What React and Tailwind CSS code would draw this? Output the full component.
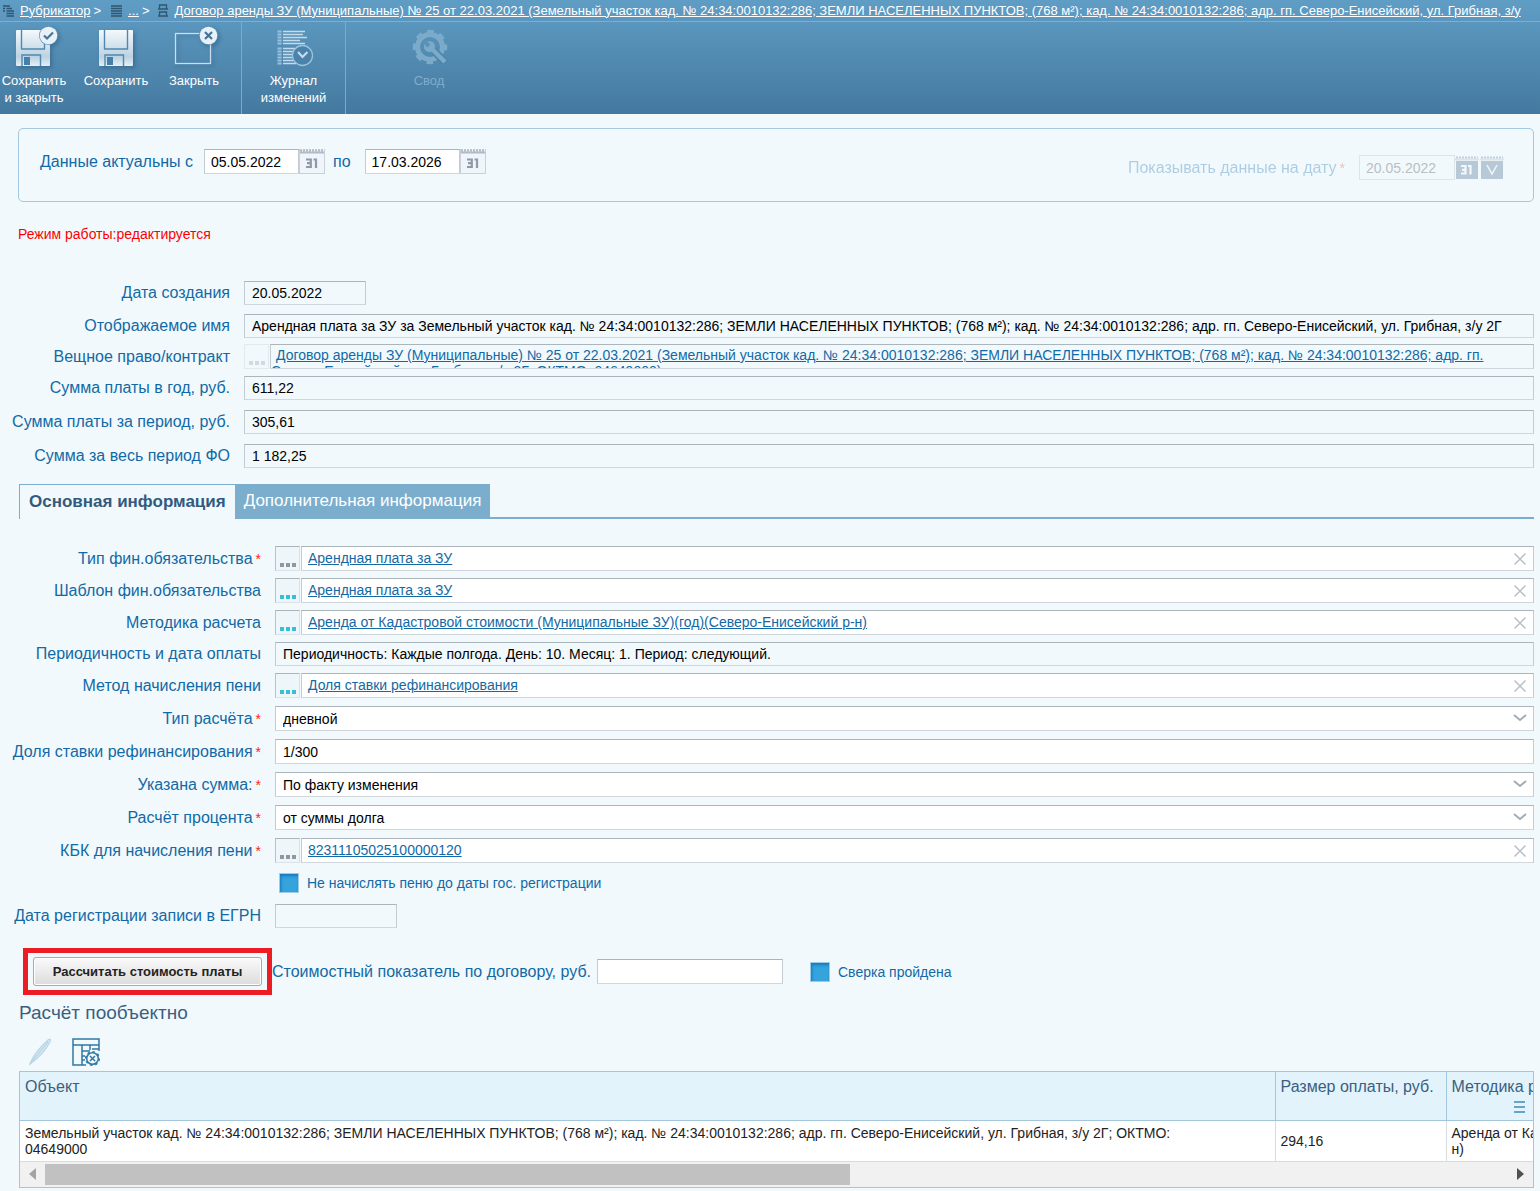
import React, { useState } from 'react'

const TITLE_TAIL =
  'Земельный участок кад. № 24:34:0010132:286; ЗЕМЛИ НАСЕЛЕННЫХ ПУНКТОВ; (768 м²); кад. № 24:34:0010132:286; адр. гп. Северо-Енисейский, ул. Грибная, з/у'
const CRUMB = `Договор аренды ЗУ (Муниципальные) № 25 от 22.03.2021 (${TITLE_TAIL}`
const CONTRACT = `${CRUMB} 2Г; ОКТМО: 04649000)`

const fieldBorder = 'border border-[#c3ccd3] border-t-[#aab5bc] border-b-[#d0d8de]'

const Floppy = ({ x }) => (
  <g transform={`translate(${x} 6)`}>
    <rect width="34" height="36" rx="1" fill="url(#steel)" />
    <path d="M5.5 0v19M28.5 0v19M5 19h24" stroke="#4f88ae" strokeWidth="1.4" fill="none" />
    <path d="M6 36V25h18.500V36" stroke="#4f88ae" strokeWidth="1.400" fill="none" />
    <rect x="8" y="27" width="6" height="8" fill="#4580a8" />
  </g>
)

const Badge = ({ children }) => (
  <g transform="translate(38.500 11.500)">
    <circle r="9.500" fill="#5a94ba" />
    <circle r="8.800" fill="#e9f1f7" />
    <g fill="none" stroke="#44749a" strokeWidth="2.200">{children}</g>
  </g>
)

const SaveCloseIcon = () => (
  <svg width="48" height="44" viewBox="0 0 48 44" className="drop-shadow-[2px_2px_2px_rgba(20,60,90,0.35)]">
    <defs>
      <linearGradient id="steel" x1="0" y1="0" x2="0" y2="1">
        <stop offset="0" stopColor="#f4f9fc" />
        <stop offset="0.750" stopColor="#bcd2e2" />
        <stop offset="1" stopColor="#e6eff5" />
      </linearGradient>
    </defs>
    <Floppy x="6" />
    <Badge><path d="M-4.500 0l3 3L4.500-3" /></Badge>
  </svg>
)

const SaveIcon = () => (
  <svg width="48" height="44" viewBox="0 0 48 44" className="drop-shadow-[2px_2px_2px_rgba(20,60,90,0.35)]">
    <Floppy x="7" />
  </svg>
)

const CloseIcon = () => (
  <svg width="48" height="44" viewBox="0 0 48 44" className="drop-shadow-[2px_2px_2px_rgba(20,60,90,0.35)]">
    <rect x="5.500" y="9.500" width="35" height="30" fill="none" stroke="#c9deec" strokeWidth="1.300" />
    <Badge><path d="M-3.500-3.500l7 7M3.500-3.500l-7 7" /></Badge>
  </svg>
)

const JournalIcon = () => (
  <svg width="48" height="44" viewBox="0 0 48 44" fill="none" stroke="#c3dbea">
    <path
      d="M13 7.500H35M13 10.500H33M13 13.500H37M13 16.500H30M13 19.500H35M13 24.500H25M13 27.500H23M13 30.500H22M13 33.500H22M13 36.500H23M13 39.500H26"
      strokeWidth="1.500"
    />
    <path
      d="M7.500 7.500h4M7.500 10.500h4M7.500 13.500h4M7.500 16.500h4M7.500 19.500h4M7.500 24.500h4M7.500 27.500h4M7.500 30.500h4M7.500 33.500h4M7.500 36.500h4M7.500 39.500h4"
      stroke="#9cc2db"
      strokeWidth="1.800"
    />
    <circle cx="32.500" cy="31.500" r="10" fill="#4b82a9" stroke="#9cc3dc" strokeWidth="1.300" />
    <path d="M28 28l4.500 5 5-5" strokeWidth="2.200" />
  </svg>
)

const GearIcon = () => (
  <svg width="48" height="44" viewBox="0 0 48 44" fill="none" stroke="#7caac9">
    <circle cx="25" cy="23" r="12.500" strokeWidth="5" />
    <circle cx="25" cy="23" r="15.500" strokeWidth="3.500" strokeDasharray="6.500 5.674" strokeDashoffset="3.250" />
    <path d="M29 27l12 12" stroke="#4d85ab" strokeWidth="8" />
    <path d="M26 24l14 14" strokeWidth="4.500" />
    <circle cx="24.500" cy="22.500" r="5.500" fill="#7caac9" stroke="none" />
    <path d="M19.500 17.500l4.500 4.500" stroke="#5a93b9" strokeWidth="4" />
  </svg>
)

const CrumbLines = () => (
  <svg width="11" height="12" viewBox="0 0 11 12" stroke="#31566f" strokeWidth="1.300" className="shrink-0">
    <path d="M0 1h11M0 3.500h11M0 6h11M0 8.500h11M0 11h11" />
  </svg>
)

const CrumbTree = () => (
  <svg width="11" height="12" viewBox="0 0 11 12" stroke="#31566f" strokeWidth="1.300" className="shrink-0">
    <path d="M0 1h7M0 3.500h2M3.500 3.500H9M0 6h2M3.500 6H11M3.500 8.500H11M3.500 11H11" />
  </svg>
)

const CrumbCard = () => (
  <svg width="10" height="13" viewBox="0 0 10 13" fill="none" stroke="#31566f" strokeWidth="1.300" className="shrink-0">
    <path d="M1.500 1h7v4h-7zM1.500 8h7v4h-7zM0 5h10M0 12h10" />
  </svg>
)

const ToolButton = ({ icon, children, width, disabled }) => (
  <button
    type="button"
    disabled={disabled}
    className={`flex flex-col items-center text-[13px] leading-[17px] ${width} ${disabled ? 'text-[#80adcb]' : 'text-white'}`}
  >
    {icon}
    <span className="mt-1 font-medium whitespace-nowrap">{children}</span>
  </button>
)

const CalendarButton = ({ label }) => (
  <button type="button" aria-label={label} className="h-[25px] w-[26px] border border-[#c9d0d8] border-t-0 bg-[#eff5fa]">
    <svg width="24" height="24" viewBox="0 0 24 24">
      <path d="M0 3.500h24" stroke="#b4bac4" strokeWidth="2" />
      <path d="M0 1.500h24" stroke="#b4bac4" strokeWidth="2.500" strokeDasharray="2 1" />
      <path d="M6 10.500H10.800v7.500H6M7 14.200h4M13.500 10.500h2.500V19" fill="none" stroke="#9199a5" strokeWidth="2.200" />
    </svg>
  </button>
)

const DarkButton = ({ label, children }) => (
  <button type="button" disabled aria-label={label} className="h-[24px] w-[24px]">
    <svg width="24" height="24" viewBox="0 0 24 24">
      <path d="M0 3.500h24" stroke="#dbe3eb" strokeWidth="2" />
      <path d="M1 1.500h22" stroke="#c3d0dc" strokeWidth="2" strokeDasharray="2 1" />
      <rect x="1" y="5" width="22" height="18" fill="#b7c8d7" />
      <g fill="none" stroke="#f2f8fc" strokeWidth="2.200">{children}</g>
    </svg>
  </button>
)

const Label = ({ id, required, children }) => (
  <label htmlFor={id} className="justify-self-end text-base leading-5 whitespace-nowrap text-[#1269a5]">
    {children}
    {required && <span className="ml-[3px] text-sm leading-none text-[#f22]">*</span>}
  </label>
)

const ReadOnly = ({ id, value, width = 'w-full' }) => (
  <input id={id} readOnly defaultValue={value} className={`h-6 px-[7px] text-sm text-black ${fieldBorder} ${width}`} />
)

const TextField = ({ id, value }) => (
  <input id={id} defaultValue={value} className={`h-[25px] w-full bg-white px-[7px] text-sm text-black ${fieldBorder}`} />
)

const Lookup = ({ id, value, accent }) => (
  <div className="flex h-[25px] gap-px">
    <button
      id={id}
      type="button"
      aria-label="Выбрать"
      className="flex w-[25px] items-end justify-center gap-[2px] border border-[#dbe3e8] border-t-[#aab5bc] border-l-[#b8c2c9] bg-[#eff6fa] pb-[3px]"
    >
      {[0, 1, 2].map((dot) => (
        <span key={dot} className={`size-1 ${accent ? 'bg-[#35bfd9]' : 'bg-[#8f97a5]'}`} />
      ))}
    </button>
    <div className={`flex min-w-0 flex-1 items-center justify-between bg-white pl-[6px] ${fieldBorder}`}>
      <a href="#" className="text-sm leading-[23px] text-[#1269a5] underline">{value}</a>
      <button type="button" aria-label="Очистить" className="flex h-full w-[26px] items-center justify-center">
        <svg width="12" height="12" viewBox="0 0 12 12" stroke="#b9c0c9" strokeWidth="1.500">
          <path d="M0.500 0.500l11 11M11.500 0.500l-11 11" />
        </svg>
      </button>
    </div>
  </div>
)

const SelectField = ({ id, value }) => (
  <div className="relative">
    <select id={id} defaultValue={value} className={`block h-[25px] w-full appearance-none bg-white px-[7px] text-sm text-black ${fieldBorder}`}>
      <option>{value}</option>
    </select>
    <svg width="14" height="8" viewBox="0 0 14 8" fill="none" className="pointer-events-none absolute top-2 right-[7px]">
      <path d="M1 1l6 5 6-5" stroke="#a3acb6" strokeWidth="2" />
    </svg>
  </div>
)

const Check = ({ id, children }) => (
  <div className="flex items-center">
    <input
      id={id}
      type="checkbox"
      className="size-5 appearance-none border border-[#9ecbe6] bg-[#35a3dc] shadow-[inset_1px_2px_3px_#1878be]"
    />
    <label htmlFor={id} className="pl-2 text-sm leading-5 text-[#1269a5]">{children}</label>
  </div>
)

const summaryRows = [
  { id: 'created', label: 'Дата создания', value: '20.05.2022', gap: '', width: 'w-[122px]' },
  { id: 'title', label: 'Отображаемое имя', value: `Арендная плата за ЗУ за ${TITLE_TAIL} 2Г`, gap: 'mt-[9px]' },
  { id: 'contract', label: 'Вещное право/контракт', contract: true, gap: 'mt-[6px]' },
  { id: 'year', label: 'Сумма платы в год, руб.', value: '611,22', gap: 'mt-[7px]' },
  { id: 'period', label: 'Сумма платы за период, руб.', value: '305,61', gap: 'mt-[10px]' },
  { id: 'total', label: 'Сумма за весь период ФО', value: '1 182,25', gap: 'mt-[10px]' }
]

const mainRows = [
  { id: 'kind', label: 'Тип фин.обязательства', required: true, type: 'lookup', value: 'Арендная плата за ЗУ', gap: '' },
  { id: 'template', label: 'Шаблон фин.обязательства', type: 'lookup', accent: true, value: 'Арендная плата за ЗУ', gap: 'mt-[7px]' },
  {
    id: 'method',
    label: 'Методика расчета',
    type: 'lookup',
    accent: true,
    value: 'Аренда от Кадастровой стоимости (Муниципальные ЗУ)(год)(Северо-Енисейский р-н)',
    gap: 'mt-[7px]'
  },
  {
    id: 'schedule',
    label: 'Периодичность и дата оплаты',
    type: 'readonly',
    value: 'Периодичность: Каждые полгода. День: 10. Месяц: 1. Период: следующий.',
    gap: 'mt-[7px]'
  },
  { id: 'penalty', label: 'Метод начисления пени', type: 'lookup', accent: true, value: 'Доля ставки рефинансирования', gap: 'mt-[7px]' },
  { id: 'calc', label: 'Тип расчёта', required: true, type: 'select', value: 'дневной', gap: 'mt-2' },
  { id: 'share', label: 'Доля ставки рефинансирования', required: true, type: 'text', value: '1/300', gap: 'mt-2' },
  { id: 'sum', label: 'Указана сумма:', required: true, type: 'select', value: 'По факту изменения', gap: 'mt-2' },
  { id: 'percent', label: 'Расчёт процента', required: true, type: 'select', value: 'от суммы долга', gap: 'mt-2' },
  { id: 'kbk', label: 'КБК для начисления пени', required: true, type: 'lookup', value: '82311105025100000120', gap: 'mt-2' }
]

const renderField = (row) => {
  switch (row.type) {
    case 'lookup':
      return <Lookup id={row.id} value={row.value} accent={row.accent} />
    case 'select':
      return <SelectField id={row.id} value={row.value} />
    case 'text':
      return <TextField id={row.id} value={row.value} />
    default:
      return <ReadOnly id={row.id} value={row.value} />
  }
}

const Header = () => (
  <header className="bg-linear-to-b from-[#609dc5] to-[#44799f] text-white">
    <nav className="flex h-[22px] items-center overflow-hidden border-b border-[#7db0d0] pl-[3px] text-[13px] font-medium whitespace-nowrap">
      <CrumbTree />
      <a href="#" className="ml-[6px] underline">Рубрикатор</a>
      <span className="mr-[10px] ml-[3px]">&gt;</span>
      <CrumbLines />
      <a href="#" className="ml-[6px] underline">...</a>
      <span className="mr-[9px] ml-[3px]">&gt;</span>
      <CrumbCard />
      <a href="#" className="ml-[6px] underline">{CRUMB}</a>
    </nav>
    <div className="flex h-[92px]">
      <div className="flex w-[242px] items-start border-r border-[#79acca] pt-[2px]">
        <ToolButton icon={<SaveCloseIcon />} width="w-[68px]">Сохранить<br />и закрыть</ToolButton>
        <ToolButton icon={<SaveIcon />} width="w-[96px]">Сохранить</ToolButton>
        <ToolButton icon={<CloseIcon />} width="w-[60px]">Закрыть</ToolButton>
      </div>
      <div className="flex w-[104px] items-start justify-center border-r border-[#79acca] pt-[2px]">
        <ToolButton icon={<JournalIcon />} width="w-[96px]">Журнал<br />изменений</ToolButton>
      </div>
      <div className="flex items-start pt-[2px] pl-[53px]">
        <ToolButton icon={<GearIcon />} width="w-[60px]" disabled>Свод</ToolButton>
      </div>
    </div>
  </header>
)

const ObjectTable = () => (
  <div className="border border-[#a3c6dc] bg-white">
    <table className="w-full table-fixed border-collapse text-left">
      <colgroup>
        <col />
        <col className="w-[171px]" />
        <col className="w-[87px]" />
      </colgroup>
      <thead className="bg-[#e2f3fc] text-base leading-5 text-[#3a5f80]">
        <tr className="h-12 border-b border-[#a3c6dc] align-top">
          <th className="px-[5px] pt-[5px] font-normal">Объект</th>
          <th className="border-l border-[#a3c6dc] pt-[5px] pl-[5px] font-normal whitespace-nowrap">Размер оплаты, руб.</th>
          <th className="overflow-hidden border-l border-[#a3c6dc] pt-[5px] pl-[5px] font-normal whitespace-nowrap">
            Методика расчета
            <svg width="11" height="12" viewBox="0 0 11 12" stroke="#6ba3c3" strokeWidth="2" className="mt-1 ml-[62px]">
              <path d="M0 1h11M0 6h11M0 11h11" />
            </svg>
          </th>
        </tr>
      </thead>
      <tbody className="text-sm leading-4 text-[#222]">
        <tr className="h-[41px] border-b border-[#d8dcdf]">
          <td className="pr-[60px] pl-[5px]">{TITLE_TAIL} 2Г; ОКТМО: 04649000</td>
          <td className="border-l border-[#d8dcdf] pl-[5px]">294,16</td>
          <td className="overflow-hidden border-l border-[#d8dcdf] pl-[5px] whitespace-nowrap">
            Аренда от Кадастровой стоимости (Муниципальные ЗУ)(год)(Северо-Енисейский р-
            <br />
            н)
          </td>
        </tr>
      </tbody>
    </table>
    <div className="flex h-[25px] items-center bg-[#f1f1f1]">
      <button type="button" aria-label="Прокрутить влево" className="flex w-[25px] justify-center">
        <svg width="7" height="12" viewBox="0 0 7 12" fill="#a3a3a3">
          <path d="M7 0v12L0 6z" />
        </svg>
      </button>
      <div className="flex-1">
        <div className="h-[21px] w-[55%] bg-[#c1c1c1]" />
      </div>
      <button type="button" aria-label="Прокрутить вправо" className="flex w-[25px] justify-center">
        <svg width="7" height="12" viewBox="0 0 7 12" fill="#505050">
          <path d="M0 0v12l7-6z" />
        </svg>
      </button>
    </div>
  </div>
)

const App = () => {
  const [tab, setTab] = useState('main')

  return (
    <div className="min-h-screen overflow-hidden bg-[#f1f9fd] font-['Liberation_Sans',Arial,sans-serif]">
      <Header />

      <main className="pr-[6px] pl-[18px]">
        {/* Period */}
        <section className="mt-[14px] flex h-[74px] items-start justify-between rounded-[5px] border border-[#a3c9e0] pr-[29px] pl-[21px]">
          <div className="flex items-center pt-5">
            <Label id="from">Данные актуальны с</Label>
            <input id="from" defaultValue="05.05.2022" className={`ml-[11px] h-[25px] w-[95px] bg-white px-[6px] text-sm text-black ${fieldBorder}`} />
            <CalendarButton label="Дата с" />
            <span className="ml-2">
              <Label id="to">по</Label>
            </span>
            <input id="to" defaultValue="17.03.2026" className={`ml-[14px] h-[25px] w-[95px] bg-white px-[6px] text-sm text-black ${fieldBorder}`} />
            <CalendarButton label="Дата по" />
          </div>
          <div className="flex items-center pt-[26px]">
            <span className="opacity-30">
              <Label id="at" required>Показывать данные на дату</Label>
            </span>
            <input id="at" disabled defaultValue="20.05.2022" className="ml-[14px] h-[25px] w-[96px] border border-[#dde4ea] px-[6px] text-sm text-[#b9bfc4]" />
            <DarkButton label="Календарь">
              <path d="M6 10h4.500v7.500H6M7 13.800h3.500M13 10h2.500V18.500" />
            </DarkButton>
            <span className="ml-px flex">
              <DarkButton label="Применить">
                <path d="M7 9l5 9 5-9" strokeWidth="1.500" />
              </DarkButton>
            </span>
          </div>
        </section>

        <p className="mt-[22px] text-sm leading-5 text-[#f00]">Режим работы:редактируется</p>

        {/* Summary */}
        <section className="mt-[37px]">
          {summaryRows.map((row) => (
            <div key={row.id} className={`grid grid-cols-[212px_minmax(0,1fr)] items-center gap-x-[14px] ${row.gap}`}>
              <Label id={row.id}>{row.label}</Label>
              {row.contract ? (
                <div className="flex h-[25px] gap-px">
                  <button id={row.id} type="button" disabled aria-label="Выбрать" className="flex w-[25px] shrink-0 items-end justify-center gap-[2px] border border-[#e3e9ed] pb-[3px]">
                    {[0, 1, 2].map((dot) => (
                      <span key={dot} className="size-1 bg-[#d3d9df]" />
                    ))}
                  </button>
                  <div className={`min-w-0 flex-1 overflow-hidden pr-2 text-sm leading-4 text-[#1269a5] ${fieldBorder}`}>
                    <a href="#" className="block pt-[2px] indent-[5px] underline">{CONTRACT}</a>
                  </div>
                </div>
              ) : (
                <ReadOnly id={row.id} value={row.value} width={row.width} />
              )}
            </div>
          ))}
        </section>

        {/* Tabs */}
        <div className="mt-4 ml-px flex border-b-2 border-[#7badcd]">
          <button
            type="button"
            onClick={() => setTab('main')}
            className={`-mb-[2px] h-[35px] border-t border-l border-[#7badcd] px-[9px] text-[17px] font-bold whitespace-nowrap ${tab === 'main' ? 'bg-[#f1f9fd] text-[#335a7e]' : 'bg-[#7badcd] text-white'}`}
          >
            Основная информация
          </button>
          <button
            type="button"
            onClick={() => setTab('extra')}
            className={`h-[33px] px-[9px] text-[17px] whitespace-nowrap ${tab === 'extra' ? 'bg-[#f1f9fd] text-[#335a7e]' : 'bg-[#7badcd] text-white'}`}
          >
            Дополнительная информация
          </button>
        </div>

        {/* Main information */}
        <section className="mt-[27px]">
          {mainRows.map((row) => (
            <div key={row.id} className={`grid grid-cols-[243px_minmax(0,1fr)] items-center gap-x-[14px] ${row.gap}`}>
              <Label id={row.id} required={row.required}>{row.label}</Label>
              {renderField(row)}
            </div>
          ))}
          <div className="mt-[10px] pl-[261px]">
            <Check id="noPenalty">Не начислять пеню до даты гос. регистрации</Check>
          </div>
          <div className="mt-[11px] grid grid-cols-[243px_minmax(0,1fr)] items-center gap-x-[14px]">
            <Label id="egrn">Дата регистрации записи в ЕГРН</Label>
            <ReadOnly id="egrn" width="w-[122px]" />
          </div>
        </section>

        {/* Calculation */}
        <section className="mt-5 flex items-center">
          <div className="ml-[5px] border-[5px] border-[#ed1c24] px-[5px] py-1">
            <button
              type="button"
              className="block h-[29px] w-[229px] rounded-[3px] border border-[#a9a9a9] bg-linear-to-b from-[#fafafa] to-[#dcdcdc] text-[13px] font-bold whitespace-nowrap text-[#222] shadow-[inset_0_0_0_1px_#fff]"
            >
              Рассчитать стоимость платы
            </button>
          </div>
          <Label id="cost">Стоимостный показатель по договору, руб.</Label>
          <input id="cost" className={`ml-[6px] h-[25px] w-[186px] bg-white px-[7px] text-sm ${fieldBorder}`} />
          <span className="ml-[27px]">
            <Check id="verified">Сверка пройдена</Check>
          </span>
        </section>

        {/* Objects */}
        <section className="ml-px">
          <h2 className="mt-[6px] text-[19px] leading-6 text-[#3a5f80]">Расчёт пообъектно</h2>
          <div className="mt-3 mb-1 flex h-[30px] gap-[18px] pl-[10px]">
            <button type="button" disabled aria-label="Редактировать">
              <svg width="25" height="28" viewBox="0 0 25 28" fill="none" stroke="#b9d6e5" strokeWidth="1.300">
                <path d="M1 26C4 18 12 8 19 2c2-1.500 3-1 2 1.500C17 12 8 21 1 26z" fill="#dcebf3" />
                <path d="M1 26L19 4" />
              </svg>
            </button>
            <button type="button" aria-label="Настроить таблицу">
              <svg width="28" height="28" viewBox="0 0 28 28" fill="none" stroke="#2f78a3" strokeWidth="1.500">
                <path d="M27 13V1H1v26h13M1 7h26M10 7v20M10 13h8M18 7v5M20 11h7M10 18h3M10 22h3" />
                <circle cx="20.500" cy="20.500" r="5.800" />
                <circle cx="20.500" cy="20.500" r="6.800" strokeDasharray="2.500 2.800" />
                <path d="M18 18l5 5M23 18l-5 5" />
              </svg>
            </button>
          </div>
          <ObjectTable />
        </section>
      </main>
    </div>
  )
}

export default App
